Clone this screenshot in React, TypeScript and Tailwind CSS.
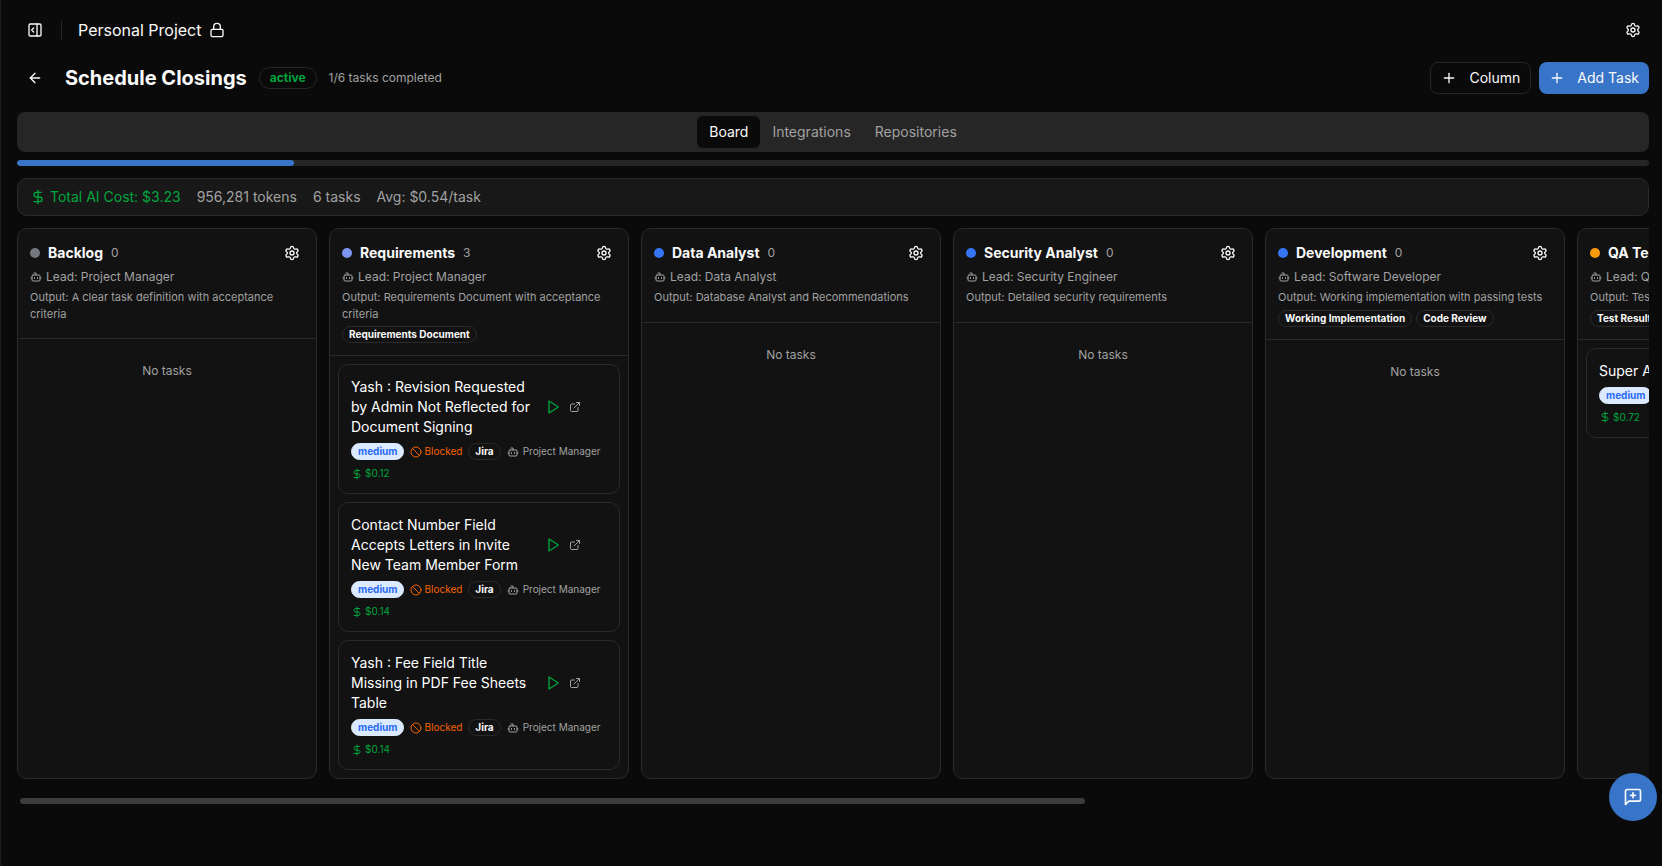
import React from 'react';
import { ArrowLeft, Ban, Bot, DollarSign, ExternalLink, Lock, PanelRightOpen, Plus, Settings } from 'lucide-react';

// --- TYPES ---
interface Task {
  id: number;
  title: string;
  cost: string;
}

interface Column {
  name: string;
  dot: string;
  lead: string;
  output: string;
  deliverables: string[];
  tasks: Task[];
}

// --- DATA ---
const columns: Column[] = [
  {
    name: 'Backlog',
    dot: 'bg-[#74787f]',
    lead: 'Project Manager',
    output: 'A clear task definition with acceptance criteria',
    deliverables: [],
    tasks: [],
  },
  {
    name: 'Requirements',
    dot: 'bg-[#7c96f0]',
    lead: 'Project Manager',
    output: 'Requirements Document with acceptance criteria',
    deliverables: ['Requirements Document'],
    tasks: [
      { id: 1, title: 'Yash : Revision Requested by Admin Not Reflected for Document Signing', cost: '$0.12' },
      { id: 2, title: 'Contact Number Field Accepts Letters in Invite New Team Member Form', cost: '$0.14' },
      { id: 3, title: 'Yash : Fee Field Title Missing in PDF Fee Sheets Table', cost: '$0.14' },
    ],
  },
  {
    name: 'Data Analyst',
    dot: 'bg-[#3574f2]',
    lead: 'Data Analyst',
    output: 'Database Analyst and Recommendations',
    deliverables: [],
    tasks: [],
  },
  {
    name: 'Security Analyst',
    dot: 'bg-[#3574f2]',
    lead: 'Security Engineer',
    output: 'Detailed security requirements',
    deliverables: [],
    tasks: [],
  },
  {
    name: 'Development',
    dot: 'bg-[#3574f2]',
    lead: 'Software Developer',
    output: 'Working implementation with passing tests',
    deliverables: ['Working Implementation', 'Code Review'],
    tasks: [],
  },
  {
    name: 'QA Testing',
    dot: 'bg-[#f99b0c]',
    lead: 'QA Engineer',
    output: 'Test results and bug reports',
    deliverables: ['Test Results'],
    tasks: [{ id: 4, title: 'Super Admin Login', cost: '$0.72' }],
  },
];

const tabs = ['Board', 'Integrations', 'Repositories'];

// --- ICONS ---
const Icon: React.FC<{ size: number; children: React.ReactNode }> = ({ size, children }) => (
  <svg
    width={size}
    height={size}
    viewBox="0 0 24 24"
    fill="none"
    stroke="currentColor"
    strokeWidth="2"
    strokeLinecap="round"
    strokeLinejoin="round"
    aria-hidden="true"
  >
    {children}
  </svg>
);

// --- CARD ---
const TaskCard: React.FC<{ task: Task }> = ({ task }) => (
  <article className="rounded-[10px] border border-[#2a2a2a] p-3">
    <div className="flex items-center">
      <h3 className="flex-1 pr-2 text-sm text-white">{task.title}</h3>
      <div className="flex w-16 shrink-0 gap-0.5">
        <button type="button" aria-label="Run task" className="flex size-5 items-center justify-center text-[#00a63e]">
          <Icon size={16}>
            <polygon points="6 3 20 12 6 21 6 3" />
          </Icon>
        </button>
        <button type="button" aria-label="Open task" className="flex size-5 items-center justify-center text-[#a1a1a1]">
          <ExternalLink size={12} />
        </button>
      </div>
    </div>
    <div className="mt-1.5 flex flex-wrap items-center gap-1.5 text-[10px] leading-normal text-[#a1a1a1]">
      <span className="rounded-full border border-[#dbeafe] bg-[#dbeafe] px-1.5 font-bold text-[#2b6bf5]">medium</span>
      <span className="flex items-center gap-0.5 text-[#f56300]">
        <Ban size={12} />
        Blocked
      </span>
      <span className="rounded-full border border-[#2a2a2a] px-1.5 font-bold text-neutral-50">Jira</span>
      <span className="flex items-center gap-1">
        <Bot size={12} />
        Project Manager
      </span>
      <span className="flex items-center gap-0.5 text-[#00a63e]">
        <DollarSign size={12} />
        {task.cost}
      </span>
    </div>
  </article>
);

// --- COLUMN ---
const BoardColumn: React.FC<{ column: Column }> = ({ column }) => (
  <section className="w-75 shrink-0 rounded-[10px] border border-[#2a2a2a] bg-[#121212]">
    <header className="border-b border-[#2a2a2a] p-3">
      <div className="flex h-6 items-center gap-2">
        <span className={`size-2.5 rounded-full ${column.dot}`} />
        <h2 className="text-sm font-bold text-neutral-50">{column.name}</h2>
        <span className="text-xs text-[#a1a1a1]">{column.tasks.length}</span>
        <button
          type="button"
          aria-label={`${column.name} settings`}
          className="ml-auto flex size-6 items-center justify-center text-neutral-50"
        >
          <Settings size={16} />
        </button>
      </div>
      <p className="mt-1 flex items-center gap-1 text-xs text-[#a1a1a1]">
        <Bot size={12} />
        Lead: {column.lead}
      </p>
      <p className="mt-1 text-[11px] leading-normal text-[#a1a1a1]">Output: {column.output}</p>
      <div className="mt-1 flex gap-1">
        {column.deliverables.map((item) => (
          <span
            key={item}
            className="rounded-full border border-[#2a2a2a] px-1.5 text-[10px] leading-normal font-bold whitespace-nowrap text-neutral-50"
          >
            {item}
          </span>
        ))}
      </div>
    </header>
    <div className="flex flex-col gap-2 p-2">
      {column.tasks.length === 0 ? (
        <p className="py-4 text-center text-xs text-[#a1a1a1]">No tasks</p>
      ) : (
        column.tasks.map((task) => <TaskCard key={task.id} task={task} />)
      )}
    </div>
  </section>
);

// --- MAIN COMPONENT ---
const App: React.FC = () => (
  <div className="min-h-screen border-l border-[#1f1f1f] bg-[#0a0a0a] pr-[13px] pl-4 font-['Inter',sans-serif] text-neutral-50">
    <header className="flex h-15 items-center">
      <button type="button" aria-label="Toggle sidebar" className="flex size-9 items-center justify-center">
        <PanelRightOpen size={16} />
      </button>
      <span className="mx-2 h-5 w-px bg-[#262626]" />
      <span className="ml-2">Personal Project</span>
      <Lock size={16} className="ml-2" />
      <button type="button" aria-label="Settings" className="ml-auto flex size-8 items-center justify-center">
        <Settings size={16} />
      </button>
    </header>

    <main>
      <div className="flex h-9 items-center gap-3">
        <button type="button" aria-label="Back" className="flex size-9 items-center justify-center">
          <ArrowLeft size={16} />
        </button>
        <h1 className="text-xl font-bold">Schedule Closings</h1>
        <span className="rounded-full border border-[#262626] px-2.5 py-0.5 text-xs font-bold text-[#00a63e]">active</span>
        <span className="text-xs text-[#a1a1a1]">1/6 tasks completed</span>
        <div className="ml-auto flex gap-2 text-sm">
          <button type="button" className="flex h-8 items-center gap-3 rounded-lg border border-[#262626] px-2.5">
            <Plus size={16} />
            Column
          </button>
          <button type="button" className="flex h-8 items-center gap-3 rounded-lg bg-[#3874c8] px-2.5">
            <Plus size={16} />
            Add Task
          </button>
        </div>
      </div>

      <div role="tablist" className="mt-4 flex h-10 items-center justify-center rounded-lg bg-[#262626] text-sm">
        {tabs.map((tab, i) => (
          <button
            key={tab}
            type="button"
            role="tab"
            aria-selected={i === 0}
            className={`h-8 rounded-md px-3 ${i === 0 ? 'bg-[#0a0a0a] text-neutral-50' : 'text-[#a1a1a1]'}`}
          >
            {tab}
          </button>
        ))}
      </div>

      <div className="mt-2 h-1.5 overflow-hidden rounded-full bg-[#262626]">
        <div className="h-full w-[17%] rounded-full bg-[#3874c8]" />
      </div>

      <div className="mt-3 flex items-center gap-4 rounded-[10px] border border-[#2a2a2a] bg-[#181818] px-3 py-2 text-sm text-[#a1a1a1]">
        <span className="flex items-center gap-1 text-[#00a63e]">
          <DollarSign size={16} />
          Total AI Cost: $3.23
        </span>
        <span>956,281 tokens</span>
        <span>6 tasks</span>
        <span>Avg: $0.54/task</span>
      </div>

      <div className="mt-3 flex gap-3 overflow-hidden">
        {columns.map((column) => (
          <BoardColumn key={column.name} column={column} />
        ))}
      </div>

      {/* Scroll position of the board */}
      <div className="mt-[19px] px-[3px]">
        <div className="h-1.5 w-[65.5%] rounded-full bg-[#3c3c3c]" />
      </div>
    </main>

    <button
      type="button"
      aria-label="Send feedback"
      className="fixed right-[5px] bottom-[45px] flex size-12 items-center justify-center rounded-full bg-[#3874c8]"
    >
      <Icon size={20}>
        <path d="M21 15a2 2 0 0 1-2 2H7l-4 4V5a2 2 0 0 1 2-2h14a2 2 0 0 1 2 2z" />
        <path d="M12 7v6M9 10h6" />
      </Icon>
    </button>
  </div>
);

export default App;
